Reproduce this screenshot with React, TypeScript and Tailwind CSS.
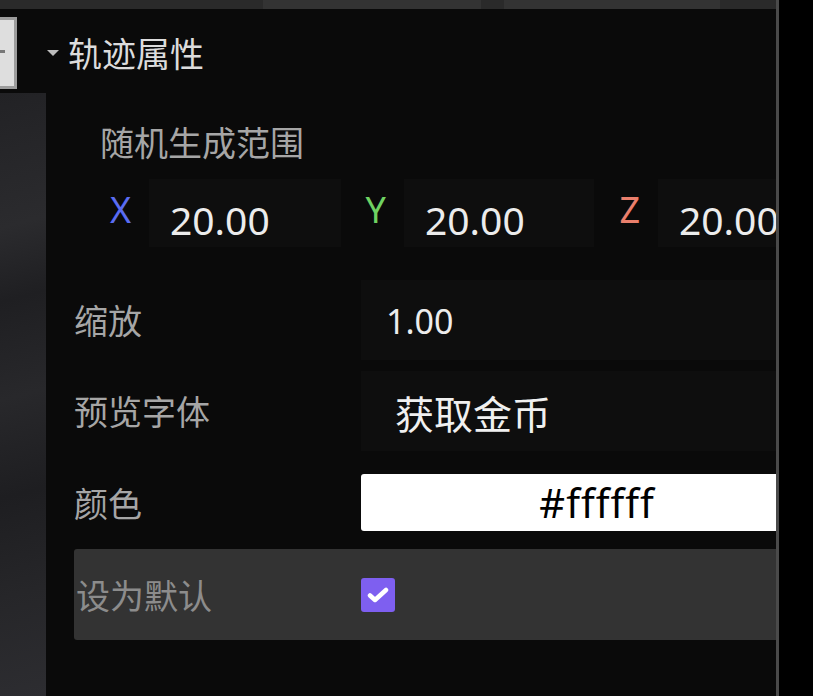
import { ReactNode } from "react";

const cjk = "font-['Noto_Sans_CJK_SC','Noto_Sans',sans-serif]";

/* ================= ROW WITH LABEL + FIELD ================= */
function Row({
  label,
  h,
  children,
  className = "",
}: {
  label: string;
  h: string;
  children: ReactNode;
  className?: string;
}) {
  return (
    <div className={`flex items-center ${h} ${className}`}>
      <div className="w-[287px] shrink-0 text-[34px] leading-none text-[#a6a6a6]">
        {label}
      </div>
      {children}
    </div>
  );
}

function AxisField({
  axis,
  color,
  labelW,
  boxW,
}: {
  axis: string;
  color: string;
  labelW: string;
  boxW: string;
}) {
  return (
    <>
      <div className={`${labelW} shrink-0 flex justify-end pr-[18px] pb-[6px]`}>
        <span className={`text-[36px] leading-none font-['Noto_Sans',sans-serif] ${color}`}>
          {axis}
        </span>
      </div>
      <div className={`${boxW} shrink-0 h-[68px] bg-[#0e0e0e] flex items-center pl-[21px] pt-[12px]`}>
        <span className="text-[39px] leading-none text-[#ececec] font-['Noto_Sans',sans-serif]">
          20.00
        </span>
      </div>
    </>
  );
}

/* ================= MAIN ================= */
export default function App() {
  return (
    <div className={`w-[813px] h-[696px] bg-black flex overflow-hidden ${cjk}`}>
      <div className="w-[776px] h-full bg-[#0a0a0a] flex flex-col overflow-hidden shrink-0">
        {/* top strip */}
        <div className="h-[9px] flex shrink-0">
          <div className="w-[263px] bg-[#2a2a2a]" />
          <div className="w-[218px] bg-[#333333]" />
          <div className="w-[23px] bg-[#2a2a2a]" />
          <div className="w-[216px] bg-[#333333]" />
          <div className="flex-1 bg-[#2a2a2a]" />
        </div>

        <div className="flex flex-1 min-h-0">
          {/* left strip */}
          <div className="w-[46px] shrink-0 flex flex-col">
            <div className="relative mt-[8px] w-[17px] h-[72px] bg-[#dedede] border-[3px] border-l-0 border-[#9c9c9c]">
              <div className="absolute left-0 top-[30px] w-[5px] h-[3px] bg-[#777]" />
            </div>
            <div className="mt-[4px] flex-1 bg-[linear-gradient(165deg,#222225_0%,#2b2b2e_22%,#1f1f22_34%,#28282b_50%,#1e1e21_66%,#262629_82%,#2d2d31_100%)]" />
          </div>

          {/* properties */}
          <div className="w-[800px] shrink-0 flex flex-col">
            <div className="h-[44px] mt-[22px] flex items-center">
              <svg width="14" height="8" viewBox="0 0 14 8" className="mr-[8px] mb-[1px]">
                <path d="M1 1h12l-6 6z" fill="#bdbdbd" />
              </svg>
              <span className="text-[34px] leading-none text-[#dcdcdc]">轨迹属性</span>
            </div>

            <div className="h-[44px] mt-[45px] flex items-center pl-[54px]">
              <span className="text-[34px] leading-none text-[#a6a6a6]">随机生成范围</span>
            </div>

            <div className="h-[68px] mt-[15px] flex items-center">
              <AxisField axis="X" color="text-[#5a6cf2]" labelW="w-[103px]" boxW="w-[192px]" />
              <AxisField axis="Y" color="text-[#6fd262]" labelW="w-[63px]" boxW="w-[190px]" />
              <AxisField axis="Z" color="text-[#ea7f6c]" labelW="w-[64px]" boxW="w-[190px]" />
            </div>

            <div className="pl-[28px] flex flex-col">
              <Row label="缩放" h="h-[80px]" className="mt-[33px]">
                <div className="w-[472px] h-[80px] bg-[#0e0e0e] flex items-center pl-[25px] pt-[2px]">
                  <span className="text-[34px] leading-none text-[#ececec] font-['Noto_Sans',sans-serif]">
                    1.00
                  </span>
                </div>
              </Row>

              <Row label="预览字体" h="h-[80px]" className="mt-[11px]">
                <div className="w-[472px] h-[80px] bg-[#0e0e0e] flex items-center pl-[34px] pt-[2px]">
                  <span className="text-[39px] leading-none text-[#f0f0f0]">获取金币</span>
                </div>
              </Row>

              <Row label="颜色" h="h-[57px]" className="mt-[23px]">
                <div className="w-[472px] h-[57px] bg-white rounded-[3px] flex items-center justify-center">
                  <span className="text-[40px] leading-none text-black font-['Noto_Sans',sans-serif] tracking-[1px]">
                    #ffffff
                  </span>
                </div>
              </Row>

              <div className="mt-[18px] h-[91px] w-[760px] bg-[#333333] rounded-[3px] flex items-center">
                <div className="w-[287px] shrink-0 pl-[2px] text-[34px] leading-none text-[#8c8c8c]">
                  设为默认
                </div>
                <div className="w-[34px] h-[34px] rounded-[3px] bg-[#7e5ff0] flex items-center justify-center">
                  <svg width="22" height="18" viewBox="0 0 22 18">
                    <path d="M3 9.5l5 4.5L19 4" stroke="white" strokeWidth="4.5" fill="none" strokeLinecap="round" strokeLinejoin="round" />
                  </svg>
                </div>
              </div>
            </div>
          </div>
        </div>
      </div>
      <div className="w-[3px] h-full bg-[#4a4a4a] shrink-0" />
    </div>
  );
}
